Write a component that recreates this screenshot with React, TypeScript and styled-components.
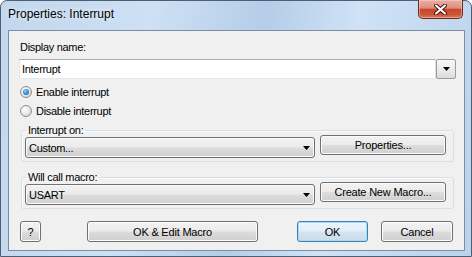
import React from 'react';
import styled, { createGlobalStyle, css } from 'styled-components';

const GlobalStyle = createGlobalStyle`
  html, body {
    margin: 0;
    padding: 0;
    background: #ffffff;
  }
  body {
    font-family: 'Liberation Sans', Arial, sans-serif;
    color: #000;
  }
`;

const DialogFrame = styled.div`
  box-sizing: border-box;
  width: 472px;
  height: 257px;
  border: 1px solid #4e5f73;
  border-radius: 7px 7px 0 0;
  padding: 0 6px 5px 7px;
  display: flex;
  flex-direction: column;
  background: linear-gradient(
    100deg,
    #c2d7ed 0%,
    #cde0f4 30%,
    #b5cde8 52%,
    #cfe2f6 70%,
    #bad2ec 100%
  );
`;

const TitleBar = styled.div`
  height: 29px;
  display: flex;
  align-items: flex-start;
  flex-shrink: 0;
`;

const TitleText = styled.span`
  margin-top: 6px;
  font-size: 12px;
  line-height: 15px;
  text-shadow: 0 0 6px rgba(255, 255, 255, 0.9);
`;

const CloseButton = styled.div`
  box-sizing: border-box;
  margin: -1px 2px 0 auto;
  width: 45px;
  height: 19px;
  border: 1px solid #6a2a20;
  border-top: none;
  border-radius: 0 0 5px 5px;
  display: flex;
  align-items: center;
  justify-content: center;
  background: linear-gradient(
    180deg,
    #e8b0a4 0%,
    #dc8e7c 45%,
    #c7462e 52%,
    #cc5438 80%,
    #d97a5a 100%
  );
  box-shadow: inset 0 0 0 1px rgba(255, 220, 210, 0.45);
`;

const ClientArea = styled.div`
  box-sizing: border-box;
  height: 221px;
  border: 1px solid #7b8ea6;
  background: #f0f0f0;
  padding: 8px 8px 0 10px;
  display: flex;
  flex-direction: column;
`;

const textStyle = css`
  font-family: 'Liberation Sans', Arial, sans-serif;
  font-size: 11px;
  letter-spacing: -0.3px;
  color: #000;
`;

const FieldLabel = styled.div`
  ${textStyle};
  height: 16px;
  line-height: 16px;
  margin-left: 1px;
`;

const InputRow = styled.div`
  display: flex;
  height: 20px;
  margin-top: 4px;
`;

const TextBox = styled.div`
  ${textStyle};
  box-sizing: border-box;
  width: 417px;
  height: 20px;
  line-height: 18px;
  padding-left: 2px;
  background: #fff;
  border: 1px solid;
  border-color: #abadb3 #dbdfe6 #e3e9ef #e2e3ea;
`;

const DropButton = styled.div`
  box-sizing: border-box;
  width: 20px;
  height: 20px;
  border: 1px solid #9c9c9c;
  border-radius: 2px;
  display: flex;
  align-items: center;
  justify-content: center;
  background: linear-gradient(180deg, #f7f7f7 0%, #ececec 50%, #dcdcdc 100%);
`;

const RadioRow = styled.div<{ $top: number }>`
  ${textStyle};
  display: flex;
  align-items: center;
  height: 16px;
  line-height: 16px;
  margin-top: ${(p) => p.$top}px;
  padding-left: 1px;
`;

const RadioCircle = styled.span<{ $checked?: boolean }>`
  box-sizing: border-box;
  width: 12px;
  height: 12px;
  border-radius: 50%;
  border: 1px solid #8c8f92;
  margin-right: 4px;
  display: flex;
  align-items: center;
  justify-content: center;
  background: radial-gradient(circle at 35% 35%, #ffffff 0%, #e8e8e8 50%, #c9cbcd 100%);

  &::after {
    content: '';
    display: ${(p) => (p.$checked ? 'block' : 'none')};
    width: 6px;
    height: 6px;
    border-radius: 50%;
    background: radial-gradient(circle at 40% 35%, #9fd3f8 0%, #3a8fd8 45%, #1c5a9e 100%);
  }
`;

const GroupBox = styled.fieldset<{ $top: number }>`
  margin: ${(p) => p.$top}px 2px 0 2px;
  padding: 0 7px 3px 3px;
  border: 1px solid #d5dfe5;
  border-radius: 3px;
  min-width: 0;
  box-shadow: inset 1px 1px 0 #fbfbfb;
`;

const GroupLegend = styled.legend`
  ${textStyle};
  line-height: 13px;
  padding: 0 2px;
  margin-left: 1px;
`;

const GroupRow = styled.div`
  display: flex;
  align-items: flex-start;
  gap: 5px;
`;

const ComboBox = styled.div`
  ${textStyle};
  box-sizing: border-box;
  width: 290px;
  height: 21px;
  padding: 0 4px 0 3px;
  border: 1px solid #707070;
  border-radius: 3px;
  display: flex;
  align-items: center;
  background: linear-gradient(180deg, #f2f2f2 0%, #ebebeb 49%, #dddddd 51%, #cfcfcf 100%);
  box-shadow: inset 0 0 0 1px #fafafa;
`;

const ComboText = styled.span`
  flex: 1;
`;

const PushButton = styled.button<{ $w: number; $ml?: number; $mt?: number; $default?: boolean }>`
  ${textStyle};
  letter-spacing: -0.2px;
  box-sizing: border-box;
  width: ${(p) => p.$w}px;
  height: ${(p) => (p.$mt ? 20 : 21)}px;
  margin: ${(p) => p.$mt ?? 0}px 0 0 ${(p) => p.$ml ?? 0}px;
  padding: 0;
  border: 1px solid #707070;
  border-radius: 3px;
  background: linear-gradient(180deg, #f2f2f2 0%, #ebebeb 49%, #dddddd 51%, #cfcfcf 100%);
  box-shadow: inset 0 0 0 1px #fcfcfc;
  text-align: center;
  line-height: 18px;
  cursor: default;

  ${(p) =>
    p.$default &&
    css`
      border-color: #3c7fb1;
      background: linear-gradient(180deg, #edf5fb 0%, #e2eef8 49%, #d3e4f2 51%, #c8dcec 100%);
      box-shadow: inset 0 0 0 1px #a8dcf7;
    `}
`;

const FooterRow = styled.div`
  display: flex;
  height: 21px;
  margin-top: 12px;
`;

const DownArrow = () => (
  <svg width="7" height="4" viewBox="0 0 7 4">
    <path d="M0 0 H7 L3.5 4 Z" fill="#000" />
  </svg>
);

const CloseGlyph = () => (
  <svg width="13" height="11" viewBox="0 0 13 11">
    <path d="M2 1.5 L11 9.5 M11 1.5 L2 9.5" stroke="#4a1710" strokeWidth="4" strokeLinecap="round" />
    <path d="M2 1.5 L11 9.5 M11 1.5 L2 9.5" stroke="#ffffff" strokeWidth="2" strokeLinecap="round" />
  </svg>
);

const App = () => {
  return (
    <>
      <GlobalStyle />
      <DialogFrame>
        <TitleBar>
          <TitleText>Properties: Interrupt</TitleText>
          <CloseButton>
            <CloseGlyph />
          </CloseButton>
        </TitleBar>
        <ClientArea>
          <FieldLabel>Display name:</FieldLabel>
          <InputRow>
            <TextBox>Interrupt</TextBox>
            <DropButton>
              <DownArrow />
            </DropButton>
          </InputRow>
          <RadioRow $top={5}>
            <RadioCircle $checked />
            Enable interrupt
          </RadioRow>
          <RadioRow $top={3}>
            <RadioCircle />
            Disable interrupt
          </RadioRow>
          <GroupBox $top={5}>
            <GroupLegend>Interrupt on:</GroupLegend>
            <GroupRow>
              <ComboBox>
                <ComboText>Custom...</ComboText>
                <DownArrow />
              </ComboBox>
              <PushButton $w={126} $mt={-2}>Properties...</PushButton>
            </GroupRow>
          </GroupBox>
          <GroupBox $top={9}>
            <GroupLegend>Will call macro:</GroupLegend>
            <GroupRow>
              <ComboBox>
                <ComboText>USART</ComboText>
                <DownArrow />
              </ComboBox>
              <PushButton $w={126} $mt={-2}>Create New Macro...</PushButton>
            </GroupRow>
          </GroupBox>
          <FooterRow>
            <PushButton $w={21} $ml={1}>?</PushButton>
            <PushButton $w={171} $ml={46}>OK &amp; Edit Macro</PushButton>
            <PushButton $w={71} $ml={39} $default>OK</PushButton>
            <PushButton $w={72} $ml={13}>Cancel</PushButton>
          </FooterRow>
        </ClientArea>
      </DialogFrame>
    </>
  );
};

export default App;
